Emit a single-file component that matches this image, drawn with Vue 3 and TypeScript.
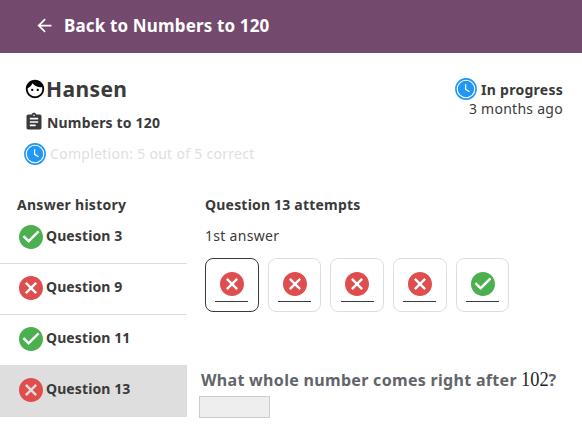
<script setup lang="ts">
import { ref } from 'vue'

interface Item {
  label: string
  correct: boolean
}

const questions: Item[] = [
  { label: 'Question 3', correct: true },
  { label: 'Question 9', correct: false },
  { label: 'Question 11', correct: true },
  { label: 'Question 13', correct: false },
]
const attempts: boolean[] = [false, false, false, false, true]
const selectedQuestion = ref(3)
const selectedAttempt = ref(0)

const CHECK = 'M12 2C6.48 2 2 6.48 2 12s4.48 10 10 10 10-4.48 10-10S17.52 2 12 2zm-2 15l-5-5 1.41-1.41L10 14.17l7.59-7.59L19 8l-9 9z'
const CROSS = 'M12 2C6.47 2 2 6.47 2 12s4.47 10 10 10 10-4.47 10-10S17.53 2 12 2zm5 13.59L15.59 17 12 13.41 8.41 17 7 15.59 10.59 12 7 8.41 8.41 7 12 10.59 15.59 7 17 8.41 13.41 12 17 15.59z'
</script>

<template>
  <div class="page">
    <header class="bar">
      <svg class="back" viewBox="0 0 24 24"><path d="M20 11H7.83l5.59-5.59L12 4l-8 8 8 8 1.41-1.41L7.83 13H20v-2z" /></svg>
      <span class="bar-title">Back to Numbers to 120</span>
    </header>

    <section class="summary">
      <div class="who">
        <h1 class="name">
          <svg class="face" viewBox="0 0 24 24"><path d="M9 11.75c-.69 0-1.25.56-1.25 1.25s.56 1.25 1.25 1.25 1.25-.56 1.25-1.25-.56-1.25-1.25-1.25zm6 0c-.69 0-1.25.56-1.25 1.25s.56 1.25 1.25 1.25 1.25-.56 1.25-1.25-.56-1.25-1.25-1.25zM12 2C6.48 2 2 6.48 2 12s4.48 10 10 10 10-4.48 10-10S17.52 2 12 2zm0 18c-4.41 0-8-3.59-8-8 0-.29.02-.58.05-.86 2.36-1.05 4.23-2.98 5.21-5.37C11.07 8.33 14.05 10 17.42 10c.78 0 1.53-.09 2.25-.26.21.71.33 1.47.33 2.26 0 4.41-3.59 8-8 8z" /></svg>
          <span>Hansen</span>
        </h1>
        <h2 class="lesson">
          <svg class="clip" viewBox="0 0 24 24"><path d="M19 3h-4.18C14.4 1.84 13.3 1 12 1c-1.3 0-2.4.84-2.82 2H5c-1.1 0-2 .9-2 2v14c0 1.1.9 2 2 2h14c1.1 0 2-.9 2-2V5c0-1.1-.9-2-2-2zm-7 0c.55 0 1 .45 1 1s-.45 1-1 1-1-.45-1-1 .45-1 1-1zm2 14H7v-2h7v2zm3-4H7v-2h10v2zm0-4H7V7h10v2z" /></svg>
          <span>Numbers to 120</span>
        </h2>
        <div class="completion">
          <svg class="clock" viewBox="0 0 22 22"><circle class="ring" cx="11" cy="11" r="10.1" /><circle class="disc" cx="11" cy="11" r="8.2" /><path class="hands" d="M10.6 6.3v5.1l3.9 2.3" /></svg>
          <span>Completion: 5 out of 5 correct</span>
        </div>
      </div>
      <div class="status">
        <div class="state">
          <svg class="clock" viewBox="0 0 22 22"><circle class="ring" cx="11" cy="11" r="10.1" /><circle class="disc" cx="11" cy="11" r="8.2" /><path class="hands" d="M10.6 6.3v5.1l3.9 2.3" /></svg>
          <span>In progress</span>
        </div>
        <div class="when">3 months ago</div>
      </div>
    </section>

    <main class="columns">
      <nav class="history">
        <h3 class="heading">Answer history</h3>
        <ul class="list">
          <li
            v-for="(q, i) in questions"
            :key="q.label"
            class="question"
            :class="{ selected: i === selectedQuestion }"
            @click="selectedQuestion = i"
          >
            <svg class="mark" :class="q.correct ? 'right' : 'wrong'" viewBox="2 2 20 20"><path :d="q.correct ? CHECK : CROSS" /></svg>
            <span>{{ q.label }}</span>
          </li>
        </ul>
      </nav>

      <section class="detail">
        <h3 class="heading">Question 13 attempts</h3>
        <p class="nth">1st answer</p>
        <div class="attempts">
          <div
            v-for="(ok, i) in attempts"
            :key="i"
            class="attempt"
            :class="{ current: i === selectedAttempt }"
            @click="selectedAttempt = i"
          >
            <svg class="mark" :class="ok ? 'right' : 'wrong'" viewBox="2 2 20 20"><path :d="ok ? CHECK : CROSS" /></svg>
            <span class="line"></span>
          </div>
        </div>
        <p class="prompt">What whole number comes right after <span class="math">102</span>?</p>
        <div class="answer"></div>
      </section>
    </main>
  </div>
</template>

<style>
body {
  margin: 0;
  background: #fff;
  overflow: hidden;
}
</style>

<style scoped>
.page {
  width: 582px;
  height: 434px;
  overflow: hidden;
  font-family: "Noto Sans", sans-serif;
  font-size: 14px;
  line-height: 19px;
  color: #3a3a3a;
  white-space: nowrap;
}
h1, h2, h3, p, ul {
  margin: 0;
  padding: 0;
}
svg {
  display: block;
  flex: none;
}
.bar {
  display: flex;
  align-items: center;
  box-sizing: border-box;
  height: 53px;
  padding: 0 0 2px 34px;
  background: #74496e;
  color: #fff;
}
.back {
  width: 21px;
  height: 21px;
  fill: #fff;
}
.bar-title {
  margin-left: 9px;
  font-size: 17px;
  font-weight: 700;
  letter-spacing: 0.15px;
}
.summary {
  display: flex;
  justify-content: space-between;
  box-sizing: border-box;
  height: 142px;
  padding: 22px 19px 0 24px;
}
.name {
  display: flex;
  align-items: center;
  height: 28px;
  font-size: 21px;
  line-height: 28px;
  letter-spacing: 0.4px;
}
.face {
  width: 22px;
  height: 22px;
  fill: #000;
}
.lesson {
  display: flex;
  align-items: center;
  height: 20px;
  margin-top: 9px;
  font-size: 14px;
  letter-spacing: 0.17px;
}
.clip {
  width: 20px;
  height: 20px;
  margin-right: 3px;
  fill: #3a3a3a;
}
.completion {
  display: flex;
  align-items: center;
  height: 22px;
  margin-top: 11px;
  color: #e0e0e0;
  letter-spacing: 0.29px;
}
.completion span {
  margin-bottom: 2px;
}
.clock {
  width: 22px;
  height: 22px;
  margin-right: 4px;
}
.ring {
  fill: #fff;
  stroke: #2196f3;
  stroke-width: 1.6;
}
.disc {
  fill: #2196f3;
}
.hands {
  fill: none;
  stroke: #fff;
  stroke-width: 1.3;
}
.status {
  padding-top: 4px;
  letter-spacing: 0.27px;
}
.state {
  display: flex;
  align-items: center;
  height: 20px;
  font-weight: 700;
}
.when {
  text-align: right;
}
.columns {
  display: flex;
}
.history {
  width: 187px;
}
.heading {
  height: 19px;
  font-size: 14px;
  letter-spacing: 0.2px;
}
.history .heading {
  padding-left: 17px;
  letter-spacing: 0.28px;
}
.list {
  list-style: none;
  margin-top: -1px;
}
.question {
  display: flex;
  align-items: center;
  box-sizing: border-box;
  height: 51px;
  padding: 0 0 2px 19px;
  border-bottom: 1px solid #dedede;
  font-weight: 700;
  letter-spacing: 0.1px;
}
.question span {
  margin: 0 0 3px 3px;
}
.selected {
  background: #dedede;
}
.mark {
  width: 24px;
  height: 24px;
}
.right {
  fill: #4caf50;
}
.wrong {
  fill: #df4d4f;
}
.detail {
  padding-left: 18px;
}
.nth {
  margin-top: 12px;
  letter-spacing: 0.3px;
}
.attempts {
  display: flex;
  gap: 9px;
  margin-top: 13px;
}
.attempt {
  display: flex;
  flex-direction: column;
  align-items: center;
  box-sizing: border-box;
  width: 53.7px;
  height: 54px;
  padding-top: 13px;
  border: 1px solid #dedede;
  border-radius: 8px;
}
.current {
  border-color: #3a3a3a;
}
.line {
  width: 33px;
  height: 1px;
  margin-top: 5px;
  background: #3a3a3a;
}
.prompt {
  margin: 57px 0 0 -4px;
  height: 22px;
  font-size: 16px;
  line-height: 22px;
  font-weight: 700;
  letter-spacing: 0.31px;
  color: #626569;
}
.math {
  display: inline-block;
  width: 27px;
  font-family: "Liberation Serif", serif;
  font-size: 20px;
  line-height: 20px;
  font-weight: 400;
  letter-spacing: 0;
  color: #21242c;
  transform: scaleX(0.92);
  transform-origin: left;
}
.answer {
  box-sizing: border-box;
  width: 71px;
  height: 22px;
  margin: 5px 0 0 -6px;
  border: 1px solid #ccc;
  background: #eee;
}
</style>
